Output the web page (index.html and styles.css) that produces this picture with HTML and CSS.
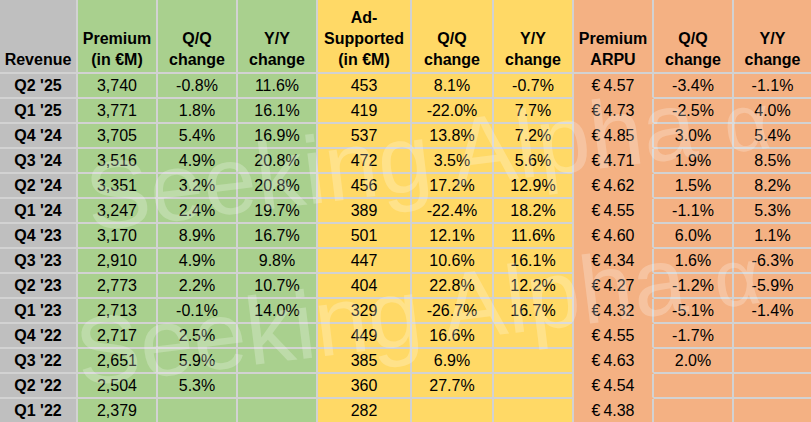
FILE: index.html
```html
<!DOCTYPE html>
<html>
<head>
<meta charset="utf-8">
<link rel="stylesheet" href="styles.css">
</head>
<body>
<div class="wrap">
  <div class="sheet">
    <div class="c h rev">Revenue</div>
    <div class="c h prem">Premium<br>(in €M)</div>
    <div class="c h prem">Q/Q<br>change</div>
    <div class="c h prem">Y/Y<br>change</div>
    <div class="c h ad">Ad-<br>Supported<br>(in €M)</div>
    <div class="c h ad">Q/Q<br>change</div>
    <div class="c h ad">Y/Y<br>change</div>
    <div class="c h arpu">Premium<br>ARPU</div>
    <div class="c h arpu">Q/Q<br>change</div>
    <div class="c h arpu last">Y/Y<br>change</div>

    <div class="c q rev">Q2 '25</div><div class="c prem">3,740</div><div class="c prem">-0.8%</div><div class="c prem">11.6%</div><div class="c ad">453</div><div class="c ad">8.1%</div><div class="c ad">-0.7%</div><div class="c arpu eur"><span class="cur">€</span>4.57</div><div class="c arpu">-3.4%</div><div class="c arpu last">-1.1%</div>
    <div class="c q rev">Q1 '25</div><div class="c prem">3,771</div><div class="c prem">1.8%</div><div class="c prem">16.1%</div><div class="c ad">419</div><div class="c ad">-22.0%</div><div class="c ad">7.7%</div><div class="c arpu eur"><span class="cur">€</span>4.73</div><div class="c arpu">-2.5%</div><div class="c arpu last">4.0%</div>
    <div class="c q rev">Q4 '24</div><div class="c prem">3,705</div><div class="c prem">5.4%</div><div class="c prem">16.9%</div><div class="c ad">537</div><div class="c ad">13.8%</div><div class="c ad">7.2%</div><div class="c arpu eur"><span class="cur">€</span>4.85</div><div class="c arpu">3.0%</div><div class="c arpu last">5.4%</div>
    <div class="c q rev">Q3 '24</div><div class="c prem">3,516</div><div class="c prem">4.9%</div><div class="c prem">20.8%</div><div class="c ad">472</div><div class="c ad">3.5%</div><div class="c ad">5.6%</div><div class="c arpu eur"><span class="cur">€</span>4.71</div><div class="c arpu">1.9%</div><div class="c arpu last">8.5%</div>
    <div class="c q rev">Q2 '24</div><div class="c prem">3,351</div><div class="c prem">3.2%</div><div class="c prem">20.8%</div><div class="c ad">456</div><div class="c ad">17.2%</div><div class="c ad">12.9%</div><div class="c arpu eur"><span class="cur">€</span>4.62</div><div class="c arpu">1.5%</div><div class="c arpu last">8.2%</div>
    <div class="c q rev">Q1 '24</div><div class="c prem">3,247</div><div class="c prem">2.4%</div><div class="c prem">19.7%</div><div class="c ad">389</div><div class="c ad">-22.4%</div><div class="c ad">18.2%</div><div class="c arpu eur"><span class="cur">€</span>4.55</div><div class="c arpu">-1.1%</div><div class="c arpu last">5.3%</div>
    <div class="c q rev">Q4 '23</div><div class="c prem">3,170</div><div class="c prem">8.9%</div><div class="c prem">16.7%</div><div class="c ad">501</div><div class="c ad">12.1%</div><div class="c ad">11.6%</div><div class="c arpu eur"><span class="cur">€</span>4.60</div><div class="c arpu">6.0%</div><div class="c arpu last">1.1%</div>
    <div class="c q rev">Q3 '23</div><div class="c prem">2,910</div><div class="c prem">4.9%</div><div class="c prem">9.8%</div><div class="c ad">447</div><div class="c ad">10.6%</div><div class="c ad">16.1%</div><div class="c arpu eur"><span class="cur">€</span>4.34</div><div class="c arpu">1.6%</div><div class="c arpu last">-6.3%</div>
    <div class="c q rev">Q2 '23</div><div class="c prem">2,773</div><div class="c prem">2.2%</div><div class="c prem">10.7%</div><div class="c ad">404</div><div class="c ad">22.8%</div><div class="c ad">12.2%</div><div class="c arpu eur"><span class="cur">€</span>4.27</div><div class="c arpu">-1.2%</div><div class="c arpu last">-5.9%</div>
    <div class="c q rev">Q1 '23</div><div class="c prem">2,713</div><div class="c prem">-0.1%</div><div class="c prem">14.0%</div><div class="c ad">329</div><div class="c ad">-26.7%</div><div class="c ad">16.7%</div><div class="c arpu eur"><span class="cur">€</span>4.32</div><div class="c arpu">-5.1%</div><div class="c arpu last">-1.4%</div>
    <div class="c q rev">Q4 '22</div><div class="c prem">2,717</div><div class="c prem">2.5%</div><div class="c prem"></div><div class="c ad">449</div><div class="c ad">16.6%</div><div class="c ad"></div><div class="c arpu eur"><span class="cur">€</span>4.55</div><div class="c arpu">-1.7%</div><div class="c arpu last"></div>
    <div class="c q rev">Q3 '22</div><div class="c prem">2,651</div><div class="c prem">5.9%</div><div class="c prem"></div><div class="c ad">385</div><div class="c ad">6.9%</div><div class="c ad"></div><div class="c arpu eur"><span class="cur">€</span>4.63</div><div class="c arpu">2.0%</div><div class="c arpu last"></div>
    <div class="c q rev">Q2 '22</div><div class="c prem">2,504</div><div class="c prem">5.3%</div><div class="c prem"></div><div class="c ad">360</div><div class="c ad">27.7%</div><div class="c ad"></div><div class="c arpu eur"><span class="cur">€</span>4.54</div><div class="c arpu"></div><div class="c arpu last"></div>
    <div class="c q rev">Q1 '22</div><div class="c prem">2,379</div><div class="c prem"></div><div class="c prem"></div><div class="c ad">282</div><div class="c ad"></div><div class="c ad"></div><div class="c arpu eur"><span class="cur">€</span>4.38</div><div class="c arpu"></div><div class="c arpu last"></div>
  </div>
  <div class="wm wm1">Seeking Alpha<span class="alpha">α</span></div>
  <div class="wm wm2">Seeking Alpha<span class="alpha">α</span></div>
</div>
</body>
</html>
```
FILE: styles.css
```css
html, body {
  margin: 0;
  padding: 0;
  overflow: hidden;
  background: #ffffff;
}
.wrap {
  position: relative;
  width: 811px;
  height: 422px;
  overflow: hidden;
}
.sheet {
  display: grid;
  grid-template-columns: 78px 80px 80px 80px 94px 82px 80px 80px 80px 77px;
  grid-template-rows: 74px repeat(14, 25px);
  font-family: "Liberation Sans", Arial, sans-serif;
  font-size: 16px;
  color: #000;
}
.c {
  box-sizing: border-box;
  border-right: 2px solid #d2d2d2;
  border-bottom: 2px solid #d2d2d2;
  display: flex;
  align-items: center;
  justify-content: center;
  text-align: center;
  white-space: nowrap;
}
.c.last { border-right: none; }
.h {
  align-items: flex-end;
  font-weight: bold;
  line-height: 21px;
  padding-bottom: 2px;
}
.q { font-weight: bold; }
.rev { background: #bfbfbf; }
.prem { background: #a9d08e; }
.ad { background: #ffd966; }
.arpu { background: #f4b183; }
.eur { border-bottom-color: transparent; }
.cur { margin-right: 3px; }
.wm {
  position: absolute;
  font-family: "Liberation Sans", Arial, sans-serif;
  font-size: 96px;
  line-height: 1;
  color: rgba(255, 255, 255, 0.24);
  white-space: nowrap;
  transform-origin: 0 100%;
  transform: rotate(-7deg);
  pointer-events: none;
}
.wm .alpha { margin-left: 28px; font-size: 80px; }
.wm1 { left: 92px; top: 150px; }
.wm2 { left: 82px; top: 305px; }
```
